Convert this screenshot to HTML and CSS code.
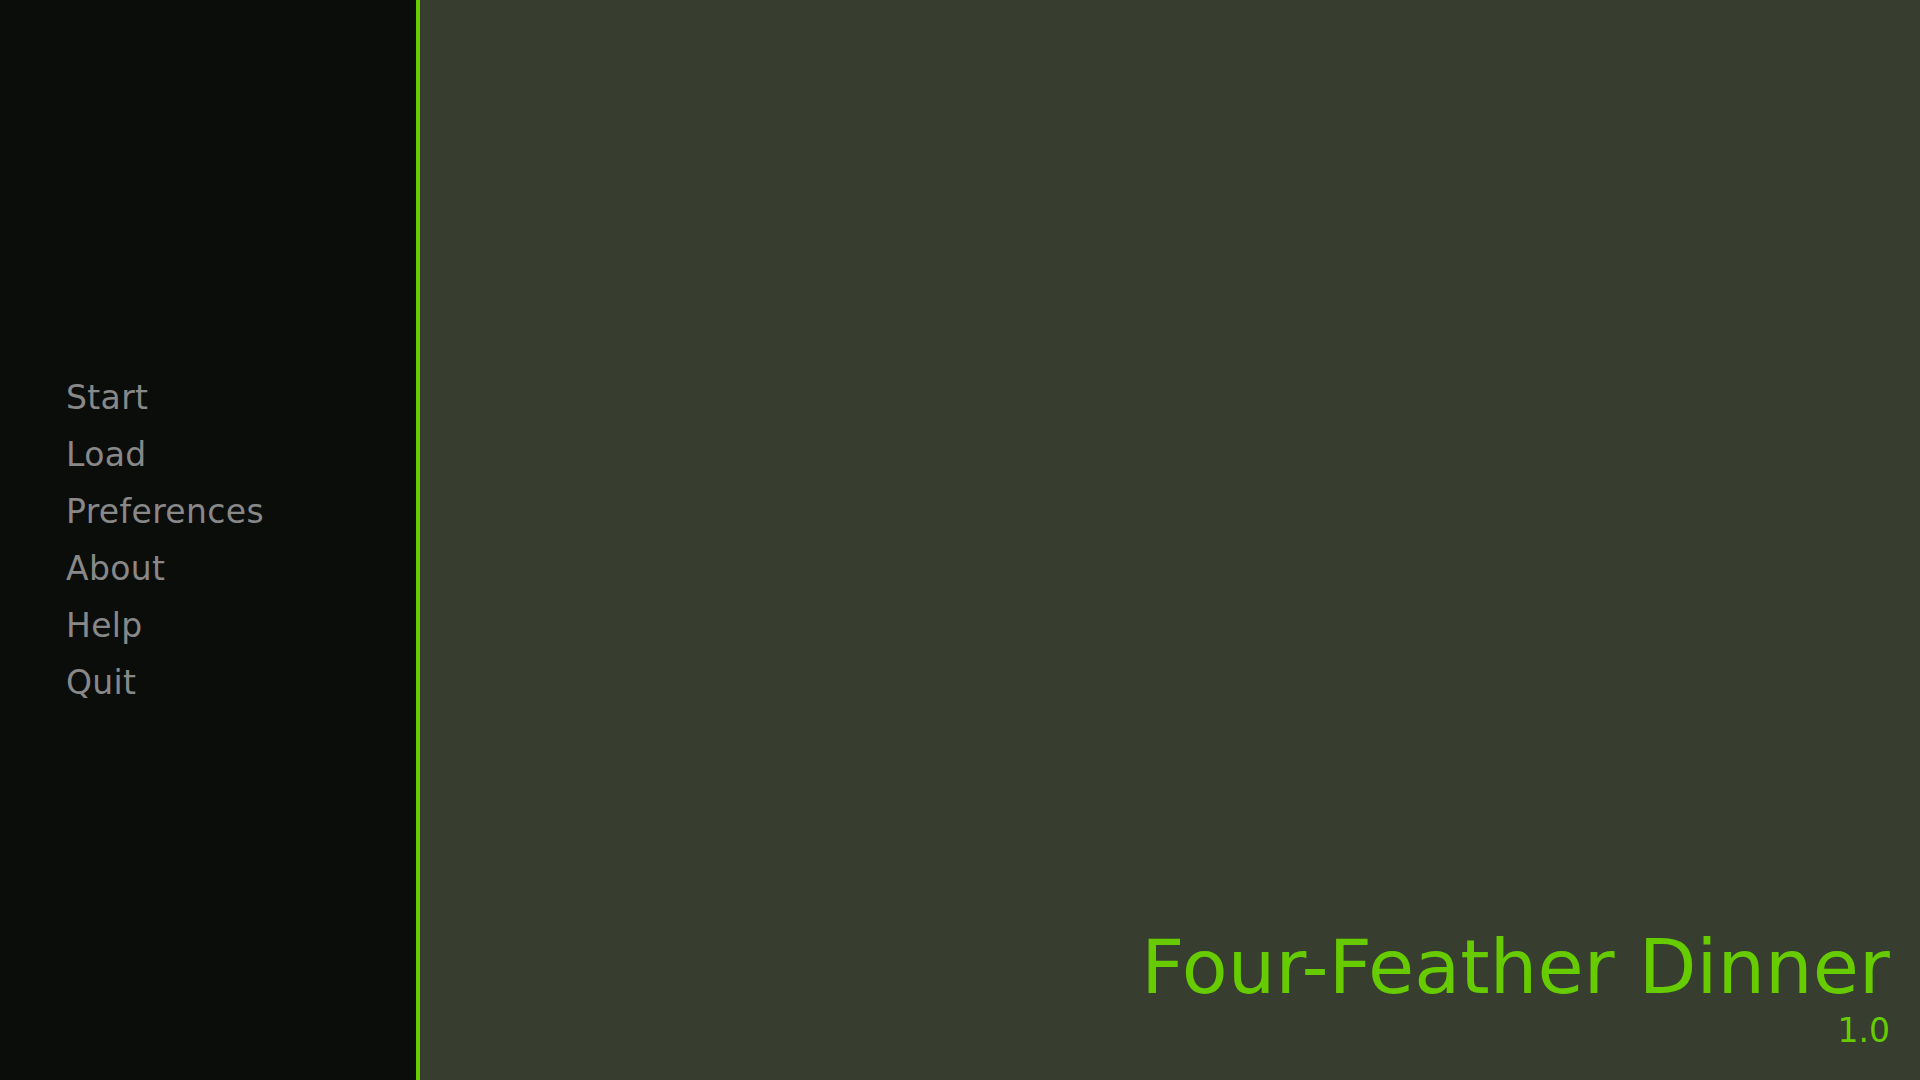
FILE: index.html
```html
<!DOCTYPE html>
<html lang="en">
<head>
<meta charset="utf-8">
<title>Four-Feather Dinner</title>
<link rel="stylesheet" href="styles.css">
</head>
<body>
<div class="screen">
  <aside class="sidebar">
    <nav class="nav">
      <a class="nav-item">Start</a>
      <a class="nav-item">Load</a>
      <a class="nav-item">Preferences</a>
      <a class="nav-item">About</a>
      <a class="nav-item">Help</a>
      <a class="nav-item">Quit</a>
    </nav>
  </aside>
  <main class="main">
    <div class="title-block">
      <div class="title">Four-Feather Dinner</div>
      <div class="version">1.0</div>
    </div>
  </main>
</div>
</body>
</html>
```
FILE: styles.css
```css
html, body {
  margin: 0;
  padding: 0;
  width: 1920px;
  height: 1080px;
  overflow: hidden;
  background: #373d2f;
  font-family: "DejaVu Sans", "Liberation Sans", sans-serif;
}
.screen {
  display: flex;
  width: 1920px;
  height: 1080px;
}
.sidebar {
  width: 416px;
  flex: 0 0 416px;
  background: #0b0d0b;
  border-right: 4px solid #66cc00;
  display: flex;
  flex-direction: column;
  justify-content: center;
}
.nav {
  display: flex;
  flex-direction: column;
  padding-left: 66px;
}
.nav-item {
  display: block;
  font-size: 33px;
  line-height: 57px;
  height: 57px;
  letter-spacing: 0.35px;
  color: #888888;
  text-decoration: none;
}
.main {
  flex: 1;
  display: flex;
  flex-direction: column;
  justify-content: flex-end;
  align-items: flex-end;
  padding: 0 30px 30px 0;
  background: #373d2f;
}
.title-block {
  display: flex;
  flex-direction: column;
  align-items: flex-end;
  color: #66cc00;
}
.title {
  font-size: 75px;
  line-height: normal;
  letter-spacing: 0.12px;
}
.version {
  font-size: 33px;
  line-height: normal;
}
```
